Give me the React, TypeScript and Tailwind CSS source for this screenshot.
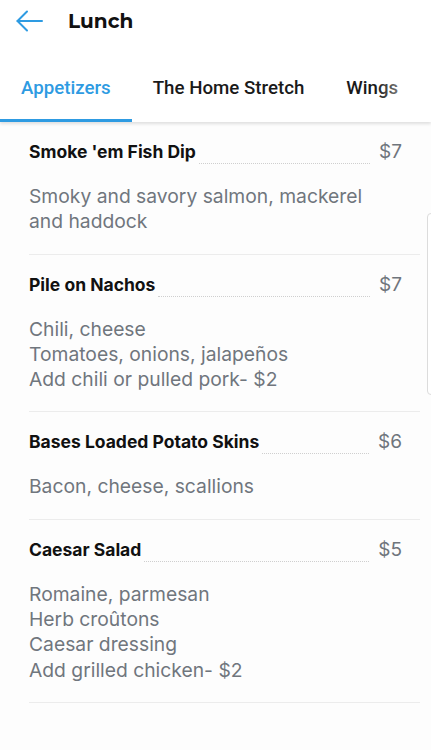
import React from "react";

const items = [
  {
    name: "Smoke 'em Fish Dip",
    price: "$7",
    lines: ["Smoky and savory salmon, mackerel", "and haddock"],
  },
  {
    name: "Pile on Nachos",
    price: "$7",
    lines: ["Chili, cheese", "Tomatoes, onions, jalapeños", "Add chili or pulled pork- $2"],
  },
  {
    name: "Bases Loaded Potato Skins",
    price: "$6",
    lines: ["Bacon, cheese, scallions"],
  },
  {
    name: "Caesar Salad",
    price: "$5",
    lines: ["Romaine, parmesan", "Herb croûtons", "Caesar dressing", "Add grilled chicken- $2"],
  },
];

const tabs = ["Appetizers", "The Home Stretch", "Wings"];

export default function App() {
  return (
    <div className="relative min-h-[750px] bg-[#fdfdfd] overflow-hidden font-['Inter',sans-serif]">
      {/* Header */}
      <div className="bg-white shadow-[0_2px_3px_rgba(0,0,0,0.12)]">
        <div className="flex items-center h-[41px] pl-[16px]">
          <svg width="27" height="22" viewBox="0 0 27 22" fill="none" stroke="#2e9be2" strokeWidth="2" strokeLinecap="round" strokeLinejoin="round">
            <path d="M26 11H1.5" />
            <path d="M11 1.5 1.5 11l9.5 9.5" />
          </svg>
          <h1 className="ml-[25px] text-[20px] font-bold text-[#111] font-['Montserrat','Roboto',sans-serif]">
            Lunch
          </h1>
        </div>
        <div className="relative flex mt-[21px] font-['Roboto',sans-serif]">
          {tabs.map((t, i) => (
            <div
              key={t}
              className={
                i === 0
                  ? "px-[21px] pt-[15px] pb-[20px] leading-[22px] text-[18.7px] font-medium text-[#2e9be2] border-b-[3px] border-[#2e9be2] shrink-0 whitespace-nowrap"
                  : "px-[21px] pt-[15px] pb-[20px] leading-[22px] text-[18.7px] font-medium text-[#1a1a1a] border-b-[3px] border-transparent shrink-0 whitespace-nowrap"
              }
            >
              {t}
            </div>
          ))}
          <div className="absolute right-0 top-0 h-full w-[55px] bg-gradient-to-r from-transparent to-white" />
        </div>
      </div>

      {/* Menu list */}
      <div className="pl-[29px] pr-[11px]">
        {items.map((it) => (
          <div key={it.name} className="pt-[20px] pb-[19px] border-b border-[#ececec]">
            <div className="flex items-end h-[20px] pr-[18px]">
              <span className="text-[17.5px] leading-[20px] font-bold text-[#111] whitespace-nowrap">
                {it.name}
              </span>
              <span className="flex-1 mx-[3px] mb-[-2px] border-b-[1.5px] border-dotted border-[#cfcfcf]" />
              <span className="ml-[6px] text-[19px] leading-[20px] text-[#6f757c]">{it.price}</span>
            </div>
            <div className="mt-[22px] text-[19.3px] leading-[25.3px] text-[#70767d]">
              {it.lines.map((l) => (
                <div key={l}>{l}</div>
              ))}
            </div>
          </div>
        ))}
      </div>

      {/* scroll handle */}
      <div className="absolute right-[-6px] top-[213px] w-[10px] h-[182px] rounded-[4px] border border-[#dcdcdc] bg-white" />
    </div>
  );
}
